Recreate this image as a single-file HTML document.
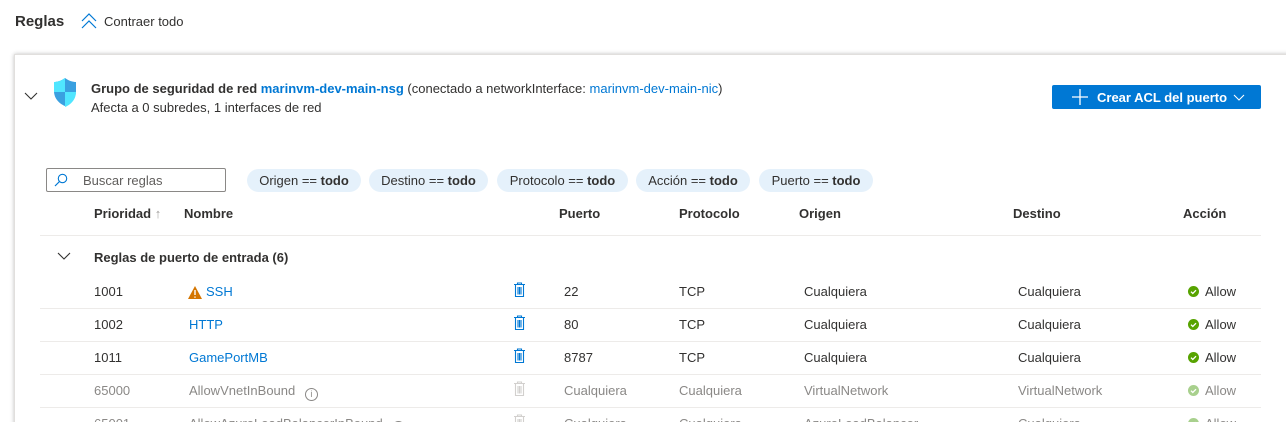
<!DOCTYPE html>
<html style="height:422px;overflow:hidden"><head><meta charset="utf-8"><style>
*{margin:0;padding:0;box-sizing:border-box}
body{width:1286px;height:422px;overflow:hidden;background:#fff;font-family:"Segoe UI","Liberation Sans",sans-serif;font-size:13px;color:#323130;position:relative}
.a{position:absolute;white-space:nowrap}
.lnk{color:#0078d4}
.g{color:#8a8886}
.card{position:absolute;left:14px;top:54px;width:1300px;height:400px;border:1px solid #e1dfdd;box-shadow:0 0 4px rgba(0,0,0,.25)}
.pill{position:absolute;top:169px;height:23px;border-radius:12px;background:#e5f1fb;line-height:24px;text-align:center}
.pill b{font-weight:600}
.hr{position:absolute;left:40px;width:1221px;height:1px;background:#edebe9}
.th{position:absolute;top:206px;font-weight:600;color:#323130}
.t{margin-top:1px}
</style></head><body>
<div class="a" style="left:15px;top:13px;font-size:15px;font-weight:600">Reglas</div>
<svg class="a" style="left:80px;top:12px" width="18" height="18" viewBox="0 0 18 18"><path d="M2 9l7-7 7 7M2 16l7-7 7 7" fill="none" stroke="#0078d4" stroke-width="1.2"/></svg>
<div class="a" style="left:104px;top:14px">Contraer todo</div>
<div class="card"></div>
<svg class="a" style="left:24px;top:91px" width="14" height="10" viewBox="0 0 14 10"><path d="M1 2l6 6 6-6" fill="none" stroke="#323130" stroke-width="1.1"/></svg>
<svg class="a" style="left:52px;top:77px" width="26" height="30" viewBox="0 0 26 30"><path d="M13 1C9 4 5 5 2 5v9c0 8 6 13 11 15 5-2 11-7 11-15V5c-3 0-7-1-11-4z" fill="#3aa0e0"/><path d="M13 1v14H2V5c3 0 7-1 11-4z" fill="#50e6ff"/><path d="M13 15h11c0 8-6 13-11 15z" fill="#50e6ff"/></svg>
<div class="a" style="left:91px;top:81px"><span style="font-weight:600">Grupo de seguridad de red </span><span class="lnk" style="font-weight:600">marinvm-dev-main-nsg</span> (conectado a networkInterface: <span class="lnk">marinvm-dev-main-nic</span>)</div>
<div class="a" style="left:91px;top:100px">Afecta a 0 subredes, 1 interfaces de red</div>
<div class="a" style="left:1052px;top:85px;width:209px;height:24px;background:#0078d4;border-radius:2px;color:#fff;font-weight:600;line-height:25px"><svg class="a" style="left:20px;top:4px" width="16" height="16" viewBox="0 0 16 16"><path d="M8 0v16M0 8h16" stroke="#fff" stroke-width="1.3"/></svg><span class="a" style="left:45px;top:0">Crear ACL del puerto</span><svg class="a" style="left:181px;top:9px" width="12" height="7" viewBox="0 0 12 7"><path d="M1 1l5 5 5-5" fill="none" stroke="#fff" stroke-width="1.1"/></svg></div>
<div class="a" style="left:46px;top:168px;width:180px;height:24px;border:1px solid #8a8886;border-radius:2px"></div>
<svg class="a" style="left:54px;top:173px" width="14" height="14" viewBox="0 0 14 14"><circle cx="8.5" cy="5.5" r="4.2" fill="none" stroke="#0078d4" stroke-width="1.1"/><path d="M5.5 8.5L1 13" stroke="#0078d4" stroke-width="1.2"/></svg>
<div class="a g" style="left:83px;top:173px;color:#605e5c">Buscar reglas</div>
<div class="pill" style="left:247px;width:114px">Origen == <b>todo</b></div>
<div class="pill" style="left:369px;width:119px">Destino == <b>todo</b></div>
<div class="pill" style="left:497px;width:131px">Protocolo == <b>todo</b></div>
<div class="pill" style="left:636px;width:114px">Acción == <b>todo</b></div>
<div class="pill" style="left:759px;width:114px">Puerto == <b>todo</b></div>
<div class="th" style="left:94px">Prioridad <span style="color:#a19f9d;font-weight:400">↑</span></div>
<div class="th" style="left:184px">Nombre</div>
<div class="th" style="left:559px">Puerto</div>
<div class="th" style="left:679px">Protocolo</div>
<div class="th" style="left:799px">Origen</div>
<div class="th" style="left:1013px">Destino</div>
<div class="th" style="left:1183px">Acción</div>
<div class="hr" style="top:235px"></div>
<svg class="a" style="left:57px;top:252px" width="14" height="9" viewBox="0 0 14 9"><path d="M1 1l6 6 6-6" fill="none" stroke="#323130" stroke-width="1.1"/></svg>
<div class="a" style="left:94px;top:250px;font-weight:600">Reglas de puerto de entrada (6)</div>

<div class="a" style="left:94px;top:284px">1001</div>
<svg class="a" style="left:188px;top:286px" width="14" height="13" viewBox="0 0 14 13"><path d="M7 0l7 13H0z" fill="#d47500"/><path d="M7 4v5M7 10.5v1.3" stroke="#fff" stroke-width="1.4"/></svg>
<div class="a lnk" style="left:206px;top:284px">SSH</div>
<div class="a lnk" style="left:189px;top:317px">HTTP</div>
<div class="a" style="left:94px;top:317px">1002</div>
<div class="a" style="left:94px;top:350px">1011</div>
<div class="a lnk" style="left:189px;top:350px">GamePortMB</div>
<div class="a" style="left:564px;top:284px">22</div>
<div class="a" style="left:564px;top:317px">80</div>
<div class="a" style="left:564px;top:350px">8787</div>
<div class="a" style="left:679px;top:284px">TCP</div><div class="a" style="left:679px;top:317px">TCP</div><div class="a" style="left:679px;top:350px">TCP</div>
<div class="a" style="left:804px;top:284px">Cualquiera</div><div class="a" style="left:804px;top:317px">Cualquiera</div><div class="a" style="left:804px;top:350px">Cualquiera</div>
<div class="a" style="left:1018px;top:284px">Cualquiera</div><div class="a" style="left:1018px;top:317px">Cualquiera</div><div class="a" style="left:1018px;top:350px">Cualquiera</div>
<div class="a g" style="left:94px;top:383px">65000</div>
<div class="a g" style="left:189px;top:383px">AllowVnetInBound <span style="display:inline-block;width:13px;height:13px;border:1px solid #8a8886;border-radius:50%;font-size:9px;line-height:11px;text-align:center;margin-left:6px;vertical-align:-2px">i</span></div>
<div class="a g" style="left:564px;top:383px">Cualquiera</div><div class="a g" style="left:679px;top:383px">Cualquiera</div><div class="a g" style="left:804px;top:383px">VirtualNetwork</div><div class="a g" style="left:1018px;top:383px">VirtualNetwork</div>
<div class="a g" style="left:94px;top:416px">65001</div>
<div class="a g" style="left:189px;top:416px">AllowAzureLoadBalancerInBound <span style="display:inline-block;width:13px;height:13px;border:1px solid #8a8886;border-radius:50%;font-size:9px;line-height:11px;text-align:center;margin-left:6px;vertical-align:-2px">i</span></div>
<div class="a g" style="left:564px;top:416px">Cualquiera</div><div class="a g" style="left:679px;top:416px">Cualquiera</div><div class="a g" style="left:804px;top:416px">AzureLoadBalancer</div><div class="a g" style="left:1018px;top:416px">Cualquiera</div>
<div class="hr" style="top:308px"></div><div class="hr" style="top:341px"></div><div class="hr" style="top:374px"></div><div class="hr" style="top:407px"></div>
<svg width="0" height="0" style="position:absolute"><defs><g id="tr"><path d="M1 2.5h11M4.5 2.5V1h4v1.5M2.5 2.5v12h8v-12M5 5v7.5M6.5 5v7.5M8 5v7.5" fill="none" stroke="currentColor" stroke-width="1.1"/></g><g id="ok"><circle cx="5.5" cy="5.5" r="5.5"/><path d="M3 5.7l1.8 1.8L8 4.2" fill="none" stroke="#fff" stroke-width="1.3"/></g></defs></svg>
<svg class="a" style="left:513px;top:282px;color:#0078d4" width="13" height="16"><use href="#tr"/></svg>
<svg class="a" style="left:513px;top:315px;color:#0078d4" width="13" height="16"><use href="#tr"/></svg>
<svg class="a" style="left:513px;top:348px;color:#0078d4" width="13" height="16"><use href="#tr"/></svg>
<svg class="a" style="left:513px;top:381px;color:#d2d0ce" width="13" height="16"><use href="#tr"/></svg>
<svg class="a" style="left:513px;top:414px;color:#d2d0ce" width="13" height="16"><use href="#tr"/></svg>
<svg class="a" style="left:1188px;top:286px;fill:#57a300" width="11" height="11"><use href="#ok"/></svg>
<svg class="a" style="left:1188px;top:319px;fill:#57a300" width="11" height="11"><use href="#ok"/></svg>
<svg class="a" style="left:1188px;top:352px;fill:#57a300" width="11" height="11"><use href="#ok"/></svg>
<svg class="a" style="left:1188px;top:385px;fill:#a8d08d" width="11" height="11"><use href="#ok"/></svg>
<svg class="a" style="left:1188px;top:418px;fill:#a8d08d" width="11" height="11"><use href="#ok"/></svg>
<div class="a" style="left:1205px;top:284px">Allow</div><div class="a" style="left:1205px;top:317px">Allow</div><div class="a" style="left:1205px;top:350px">Allow</div>
<div class="a g" style="left:1205px;top:383px">Allow</div><div class="a g" style="left:1205px;top:416px">Allow</div>
</body></html>
